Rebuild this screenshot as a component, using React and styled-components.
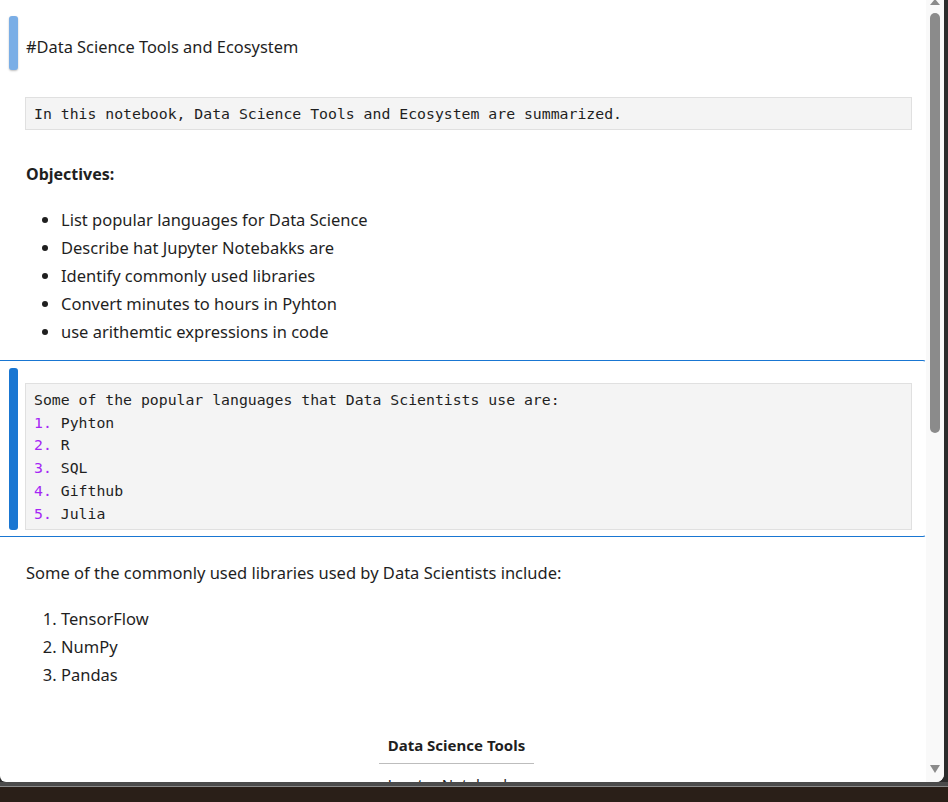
import styled, { createGlobalStyle } from 'styled-components';

const GlobalStyle = createGlobalStyle`
    html, body {
        margin:0;
        padding:0;
        background:#2b2b2b;
    }
`;

const languages = ['Pyhton', 'R', 'SQL', 'Gifthub', 'Julia'];

const objectives = [
    'List popular languages for Data Science',
    'Describe hat Jupyter Notebakks are',
    'Identify commonly used libraries',
    'Convert minutes to hours in Pyhton',
    'use arithemtic expressions in code',
];

const libraries = ['TensorFlow', 'NumPy', 'Pandas'];

const App = () => {
    return (
        <Screen>
            <GlobalStyle />
            <Window>
                <Notebook>

                    <Cell>
                        <Marker tone="hover" height={54} />
                        <Heading>#Data Science Tools and Ecosystem</Heading>
                    </Cell>

                    <Cell space={27}>
                        <span />
                        <Pre>In this notebook, Data Science Tools and Ecosystem are summarized.</Pre>
                    </Cell>

                    <Cell space={32}>
                        <span />
                        <div>
                            <Strong>Objectives:</Strong>
                            <Bullets>
                                {objectives.map((o) => <li key={o}>{o}</li>)}
                            </Bullets>
                        </div>
                    </Cell>

                    <Cell selected space={14}>
                        <Marker tone="active" />
                        <Pre top={15}>
                            Some of the popular languages that Data Scientists use are:
                            {languages.map((l, i) => (
                                <div key={l}><Num>{i + 1}.</Num> {l}</div>
                            ))}
                        </Pre>
                    </Cell>

                    <Cell space={24}>
                        <span />
                        <div>
                            <Para>Some of the commonly used libraries used by Data Scientists include:</Para>
                            <Numbered>
                                {libraries.map((l) => <li key={l}>{l}</li>)}
                            </Numbered>
                        </div>
                    </Cell>

                    <Cell space={42}>
                        <span />
                        <TableWrap>
                            <Table>
                                <thead>
                                    <tr><th>Data Science Tools</th></tr>
                                </thead>
                                <tbody>
                                    <tr><td>Jupyter Notebook</td></tr>
                                    <tr><td>RStudio</td></tr>
                                    <tr><td>VS Code</td></tr>
                                </tbody>
                            </Table>
                        </TableWrap>
                    </Cell>

                </Notebook>

                <Scrollbar>
                    <Arrow dir="up" />
                    <Thumb />
                    <Arrow dir="down" />
                </Scrollbar>
            </Window>
            <Taskbar />
        </Screen>
    );
}


const Screen = styled.div`
    width:948px;
    height:802px;
    overflow:hidden;
    background:#2b2b2b;
    display:flex;
    flex-direction:column;
`;

const Window = styled.div`
    width:944px;
    height:782px;
    flex:none;
    background:#fff;
    border-radius:0 0 8px 6px;
    display:flex;
    overflow:hidden;
`;

const Notebook = styled.div`
    flex:1;
    padding-top:16px;
    overflow:hidden;
    font-family:"Noto Sans", "Open Sans", sans-serif;
    color:#1f1f1f;
`;

const Cell = styled.div`
    display:grid;
    grid-template-columns:25px 1fr;
    align-items:start;
    margin-top:${p => p.space || 0}px;
    padding-right:14px;
    ${p => p.selected && `
        border-top:1px solid #1976d2;
        border-bottom:1px solid #1976d2;
        border-right:1px solid transparent;
        border-radius:0 3px 3px 0;
        padding-top:7px;
        padding-bottom:6px;
        padding-right:13px;
    `}
`;

const Marker = styled.div`
    width:9px;
    margin-left:9px;
    align-self:${p => p.height ? 'start' : 'stretch'};
    height:${p => p.height ? `${p.height}px` : 'auto'};
    border-radius:3px;
    background:${p => p.tone === 'active' ? '#1976d2' : '#7aaee6'};
    box-shadow:${p => p.tone === 'active' ? 'none' : '0 1px 2px rgba(0,0,0,0.25)'};
`;

const Heading = styled.div`
    padding:19px 0 0 1px;
    font-size:16.4px;
    line-height:24px;
`;

const Pre = styled.div`
    margin-top:${p => p.top || 0}px;
    background:#f4f4f4;
    border:1px solid #e0e0e0;
    padding:5px 8px 3px;
    font-family:"DejaVu Sans Mono", "Liberation Mono", monospace;
    font-size:14.8px;
    line-height:22.8px;
    color:#1f1f1f;
    white-space:pre;
`;

const Num = styled.span`
    color:#a526f5;
`;

const Strong = styled.div`
    padding-left:1px;
    font-size:16px;
    font-weight:700;
    line-height:24px;
`;

const Bullets = styled.ul`
    margin:20px 0 0 0;
    padding-left:36px;
    font-size:16.5px;
    line-height:28px;
    list-style:disc;
`;

const Para = styled.div`
    padding-left:1px;
    font-size:16.5px;
    line-height:24px;
`;

const Numbered = styled.ol`
    margin:20px 0 0 0;
    padding-left:36px;
    font-size:16.5px;
    line-height:28px;
`;

const TableWrap = styled.div`
    display:flex;
    justify-content:center;
    padding-right:24px;
`;

const Table = styled.table`
    border-collapse:collapse;
    font-size:15px;
    & th {
        font-weight:700;
        padding:4px 9px 8px;
        border-bottom:1px solid #bdbdbd;
    }
    & td {
        padding:10px 9px 6px;
        text-align:left;
    }
`;

const Scrollbar = styled.div`
    width:18px;
    flex:none;
    background:#f9f9f9;
    display:flex;
    flex-direction:column;
    align-items:center;
`;

const Thumb = styled.div`
    width:10px;
    height:420px;
    margin-top:8px;
    border-radius:5px;
    background:#8b8b8b;
`;

const Arrow = styled.div`
    width:0;
    height:0;
    border-left:5px solid transparent;
    border-right:5px solid transparent;
    ${p => p.dir === 'up'
        ? `border-bottom:6px solid #8b8b8b; margin-top:-1px;`
        : `border-top:8px solid #8b8b8b; margin-top:auto; margin-bottom:9px;`}
`;

const Taskbar = styled.div`
    flex:1;
    border-top:4px solid #4b4b4b;
    box-shadow:inset 0 1px 0 #8a8a8a;
    background:#2a1f18;
`;

export default App;
